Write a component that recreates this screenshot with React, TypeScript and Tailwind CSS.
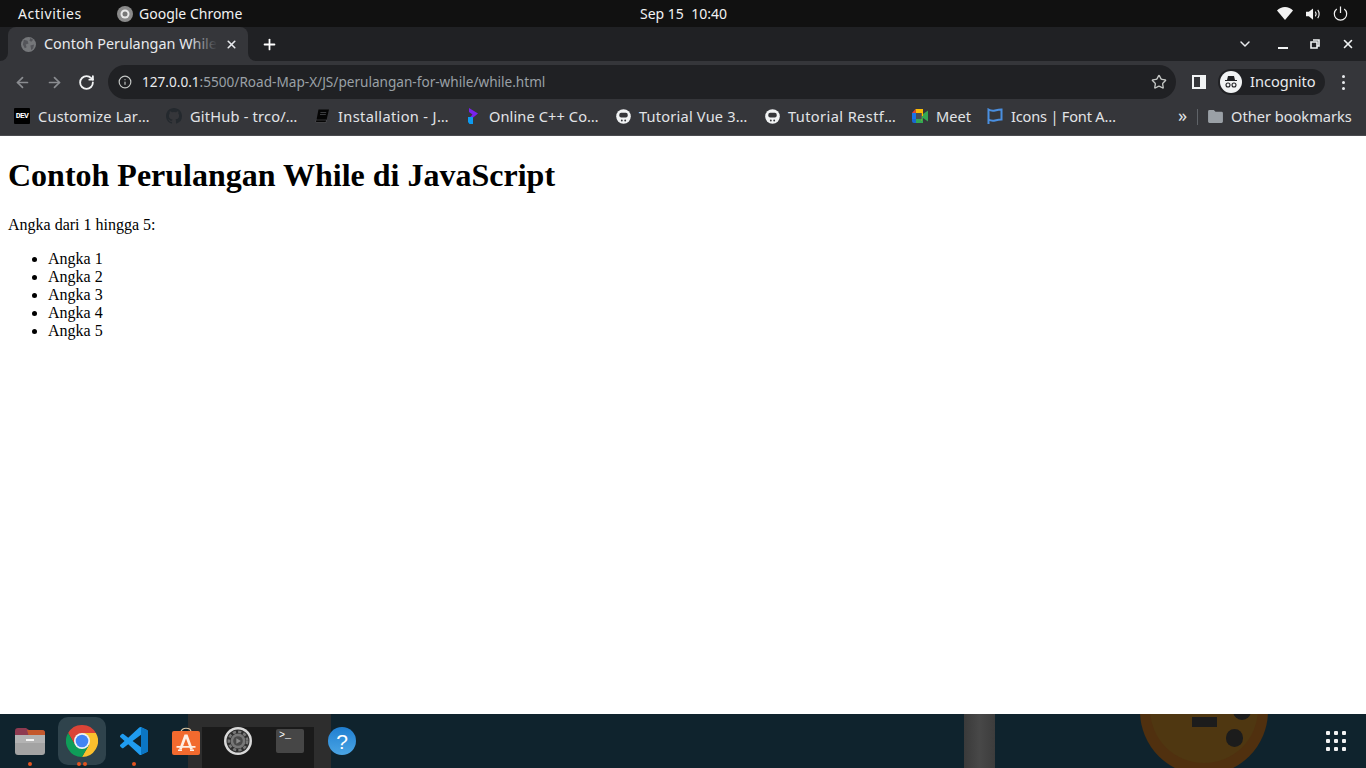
import { ArrowLeft, ArrowRight, ChevronDown, Info, Plus, RotateCw, Star, X } from 'lucide-react'

const sans = "font-['Noto_Sans',sans-serif]"

const DevIcon = () => (
  <span className="flex h-4 w-4 items-center justify-center rounded-[1px] bg-black font-['Liberation_Mono',monospace] text-[8px] font-bold tracking-[-0.6px] text-white">DEV</span>
)

const GithubIcon = () => (
  <svg viewBox="0 0 16 16" className="h-4 w-4" fill="#24292e">
    <path d="M8 0C3.58 0 0 3.58 0 8c0 3.54 2.29 6.53 5.47 7.59.4.07.55-.17.55-.38v-1.34c-2.23.48-2.7-1.07-2.7-1.07-.36-.92-.89-1.17-.89-1.17-.73-.5.05-.49.05-.49.8.06 1.23.83 1.23.83.71 1.22 1.87.87 2.33.66.07-.52.28-.87.5-1.07-1.78-.2-3.64-.89-3.64-3.95 0-.87.31-1.59.82-2.15-.08-.2-.36-1.02.08-2.12 0 0 .67-.21 2.2.82a7.6 7.6 0 0 1 4 0c1.53-1.04 2.2-.82 2.2-.82.44 1.1.16 1.92.08 2.12.51.56.82 1.27.82 2.15 0 3.07-1.87 3.75-3.65 3.95.29.25.54.73.54 1.48v2.2c0 .21.15.46.55.38A8 8 0 0 0 16 8c0-4.42-3.58-8-8-8z" />
  </svg>
)

const BookIcon = () => (
  <svg viewBox="0 0 16 16" className="h-4 w-4">
    <path d="M4.500 1.500h10.500l-2.500 10.500H2.500z" fill="#050505" />
    <path d="M2.500 12h10l-.5 2.500H2.500c-1.200 0-1.200-2.500 0-2.500z" fill="#050505" stroke="#66676b" strokeWidth=".5" />
    <path d="M6.400 4.500h5.800M6 6.500h5.800" stroke="#55565a" strokeWidth=".7" />
  </svg>
)

const PrismIcon = () => (
  <svg viewBox="0 0 10 16" className="h-4 w-[10px]">
    <path d="M1 0l9 5.500L4 10.500H1L4.500 6.500 1 4z" fill="#7a22ee" />
    <path d="M0 9h5v7H1.500L0 14z" fill="#0d9bf0" />
  </svg>
)

const SkullIcon = () => (
  <svg viewBox="0 0 16 16" className="h-[15px] w-[15px]">
    <circle cx="8" cy="8" r="7.800" fill="#f1f3f4" />
    <rect x="3.500" y="4" width="9" height="5" rx="2" fill="#35363a" />
    <circle cx="6.200" cy="12.300" r="1" fill="#35363a" />
    <circle cx="9.800" cy="12.300" r="1" fill="#35363a" />
  </svg>
)

const MeetIcon = () => (
  <svg viewBox="0 0 16 14" className="h-[14px] w-4">
    <path d="M3.500 0H11v4H3.500z" fill="#fbbc04" />
    <path d="M3.500 0v4H0z" fill="#ea4335" />
    <path d="M0 4h4v6H0z" fill="#1a73e8" />
    <path d="M0 10h4v4H2a2 2 0 0 1-2-2z" fill="#1967d2" />
    <path d="M4 10h7v4H4z" fill="#34a853" />
    <path d="M9.500 2H11v10H9.500z" fill="#fbbc04" />
    <path d="M9.500 7H11v5H9.500z" fill="#34a853" />
    <path d="M11 5l5-3.500v11L11 9z" fill="#34a853" />
    <path d="M4 4h5.500v6H4z" fill="#4b4d52" />
  </svg>
)

const FlagIcon = () => (
  <svg viewBox="0 0 16 16" className="h-4 w-4" fill="none" stroke="#4a8fe0" strokeWidth="2">
    <path d="M1.500 16V1.500C4 3 6 3 8 2.500s4-1 6.500-1v10c-2.500 0-4.500.5-6.500 1s-4 .5-6.500-1" />
  </svg>
)

const FolderIcon = () => (
  <svg viewBox="0 0 16 14" className="h-[13px] w-[15px]" fill="#9aa0a6">
    <path d="M1.500 0h4.700L8 2h6.500A1.500 1.500 0 0 1 16 3.500v9a1.500 1.500 0 0 1-1.500 1.500h-13A1.500 1.500 0 0 1 0 12.500v-11A1.500 1.500 0 0 1 1.500 0z" />
  </svg>
)

const bookmarks = [
  { icon: <DevIcon />, label: 'Customize Lar', width: 'w-[112px] tracking-[0.2px]' },
  { icon: <GithubIcon />, label: 'GitHub - trco/', width: 'w-[108px] tracking-[0.2px]' },
  { icon: <BookIcon />, label: 'Installation - J', width: 'w-[111px] tracking-[0.35px]' },
  { icon: <PrismIcon />, label: 'Online C++ Co', width: 'w-[110px] tracking-[0.1px]' },
  { icon: <SkullIcon />, label: 'Tutorial Vue 3', width: 'w-[109px] tracking-[0.2px]' },
  { icon: <SkullIcon />, label: 'Tutorial Restf', width: 'w-[108px] tracking-[0.4px]' },
  { icon: <MeetIcon />, label: 'Meet', width: 'w-[35px]', plain: true },
  { icon: <FlagIcon />, label: 'Icons | Font A', width: 'w-[106px] tracking-[-0.2px]' },
]

const TopBar = () => (
  <div className={`relative flex h-[27px] items-center bg-[#111111] pl-[18px] text-[14px] text-[#f2f2f2] ${sans}`}>
    <span className="w-[99px] tracking-[0.55px]">Activities</span>
    <svg viewBox="0 0 16 16" className="mr-[6px] h-4 w-4">
      <circle cx="8" cy="8" r="8" fill="#8a8a8a" />
      <circle cx="8" cy="8" r="4.500" fill="#e8e8e8" />
      <circle cx="8" cy="8" r="2.500" fill="#777777" />
    </svg>
    <span>Google Chrome</span>
    <span className="absolute left-[640px] top-[3px] whitespace-pre">Sep 15  10:40</span>
    <div className="ml-auto flex items-center pr-[18px]">
      <svg viewBox="0 0 16 13" className="mr-[13px] h-[13px] w-4" fill="#f2f2f2">
        <path d="M8 13L0 3.500C2 1.500 5 0 8 0s6 1.500 8 3.500z" />
      </svg>
      <svg viewBox="0 0 16 14" className="mr-[12px] h-[14px] w-[15px]" fill="none">
        <path d="M0 4.500h3L7.500 1v12L3 9.500H0z" fill="#f2f2f2" />
        <path d="M10 4.500c1 1.500 1 3.500 0 5M12.500 2.500c2 2.500 2 6.500 0 9" stroke="#f2f2f2" strokeWidth="1.200" />
      </svg>
      <svg viewBox="0 0 16 16" className="h-[15px] w-[15px]" fill="none" stroke="#f2f2f2" strokeWidth="1.300">
        <path d="M4 3.200a6.600 6.600 0 1 0 8 0M8 .5v7" />
      </svg>
    </div>
  </div>
)

const TabStrip = () => (
  <div className={`flex h-[34px] items-center bg-[#202124] pl-2 ${sans}`}>
    <div className="relative flex h-full w-[240px] items-center rounded-t-[8px] bg-[#35363a] pl-[13px] pr-2 text-[14.4px] text-[#e8eaed]">
      <span className="absolute bottom-0 left-[-8px] h-2 w-2 bg-[#35363a]">
        <span className="block h-full w-full rounded-br-[8px] bg-[#202124]" />
      </span>
      <span className="absolute bottom-0 right-[-8px] h-2 w-2 bg-[#35363a]">
        <span className="block h-full w-full rounded-bl-[8px] bg-[#202124]" />
      </span>
      <svg viewBox="0 0 16 16" className="mr-[8px] h-[15px] w-[15px] shrink-0">
        <circle cx="8" cy="8" r="8" fill="#75777a" />
        <path d="M3 3l4 1 1 3-3 1 1 3-2 1-2-4zM10 1l3 2-2 2-2-1zM10 9l4-1-1 4-2 2z" fill="#54555a" />
      </svg>
      <div className="relative w-[173px] overflow-hidden whitespace-nowrap">
        Contoh Perulangan While
        <span className="absolute inset-y-0 right-0 w-7 bg-gradient-to-r from-transparent to-[#35363a]" />
      </div>
      <X size={13} strokeWidth={3} className="ml-[8px] shrink-0 text-[#e8eaed]" />
    </div>
    <Plus size={17} strokeWidth={2.5} className="ml-[13px] text-white" />
    <div className="ml-auto flex items-center text-[#e8eaed]">
      <ChevronDown size={16} strokeWidth={2.2} className="mr-[25px]" />
      <svg viewBox="0 0 10 2" className="mr-[22px] mt-[7px] h-[2px] w-[10px]" fill="#f1f3f4"><path d="M0 0h10v2H0z" /></svg>
      <svg viewBox="0 0 10 10" className="mr-[21px] h-[10px] w-[10px]" fill="none" stroke="#f1f3f4" strokeWidth="1.600">
        <path d="M3 1h6v6H7M1 3h6v6H1z" />
      </svg>
      <X size={14} strokeWidth={2.8} className="mr-[11px] text-[#f1f3f4]" />
    </div>
  </div>
)

const Toolbar = () => (
  <div className={`flex h-[39px] items-center bg-[#35363a] pl-[14px] pt-[3px] ${sans}`}>
    <ArrowLeft size={17} strokeWidth={2.4} className="mr-[15px] text-[#8b8d91]" />
    <ArrowRight size={17} strokeWidth={2.4} className="mr-[15px] text-[#8b8d91]" />
    <RotateCw size={17} strokeWidth={2.6} className="mr-[13px] text-[#f1f3f4]" />
    <div className="flex h-[34px] w-[1068px] items-center rounded-full bg-[#202124] pl-[10px] pr-[9px] text-[13.6px]">
      <Info size={14} strokeWidth={2} className="mr-[10px] text-[#c4c7c5]" />
      <span className="text-[#e8eaed]">127.0.0.1</span>
      <span className="text-[#9aa0a6]">:5500/Road-Map-X/JS/perulangan-for-while/while.html</span>
      <Star size={16} strokeWidth={2} className="ml-auto text-[#c4c7c5]" />
    </div>
    <svg viewBox="0 0 14 14" className="ml-4 h-[14px] w-[14px]" fill="#f1f3f4">
      <path fillRule="evenodd" d="M0 0h14v14H0zM2 2v10h6V2z" />
    </svg>
    <div className="ml-[12px] flex h-[26px] w-[107px] items-center rounded-full bg-[#202124] pl-[2px] text-[14.6px] text-[#e8eaed]">
      <svg viewBox="0 0 22 22" className="mr-2 h-[22px] w-[22px]">
        <circle cx="11" cy="11" r="11" fill="#f1f3f4" />
        <path d="M8 5h6l1 4h2v1H5V9h2z" fill="#202124" />
        <circle cx="8" cy="14" r="2" fill="none" stroke="#202124" strokeWidth="1.100" />
        <circle cx="14" cy="14" r="2" fill="none" stroke="#202124" strokeWidth="1.100" />
      </svg>
      Incognito
    </div>
    <div className="ml-[17px] flex flex-col gap-[3px]">
      <span className="h-[3px] w-[3px] rounded-full bg-[#e8eaed]" />
      <span className="h-[3px] w-[3px] rounded-full bg-[#e8eaed]" />
      <span className="h-[3px] w-[3px] rounded-full bg-[#e8eaed]" />
    </div>
  </div>
)

const BookmarksBar = () => (
  <div className={`flex h-[36px] items-center gap-4 border-b border-[#4a4b4f] bg-[#35363a] pb-[2px] pl-[14px] text-[14.6px] text-[#e2e4e7] ${sans}`}>
    {bookmarks.map((b, i) => (
      <div key={i} className="flex items-center gap-2">
        <span className="flex w-4 justify-center">{b.icon}</span>
        <span className={`whitespace-nowrap ${b.width}`}>
          {b.label}
          {!b.plain && <span className="tracking-[1px]">…</span>}
        </span>
      </div>
    ))}
    <span className="mb-[3px] ml-[45px] w-[10px] text-[18px] leading-none">»</span>
    <span className="ml-[-7px] h-[16px] w-px bg-[#5f6368]" />
    <div className="ml-[-6px] flex items-center gap-[8px]">
      <FolderIcon />
      <span className="whitespace-nowrap">Other bookmarks</span>
    </div>
  </div>
)

const ChromeLogo = () => (
  <svg viewBox="0 0 32 32" className="h-8 w-8">
    <path d="M2.140 8A16 16 0 0 1 29.860 8H16L9.070 20z" fill="#db4437" />
    <path d="M29.860 8A16 16 0 0 1 16 32l6.930-12L16 8z" fill="#fbc02d" />
    <path d="M16 32A16 16 0 0 1 2.140 8l6.930 12h13.860z" fill="#0f9d58" />
    <circle cx="16" cy="16" r="8" fill="#f1f3f4" />
    <circle cx="16" cy="16" r="6.300" fill="#4285f4" />
  </svg>
)

const Dot = () => <span className="h-1 w-1 rounded-full bg-[#e2531f]" />

const dockIcons = [
  {
    dots: 1,
    icon: (
      <svg viewBox="0 0 30 27" className="h-[27px] w-[30px]">
        <path d="M0 3a3 3 0 0 1 3-3h8l3 2h13a3 3 0 0 1 3 3v6H0z" fill="#8e3a50" />
        <path d="M12 2h15a3 3 0 0 1 3 3v4H14z" fill="#c4582c" />
        <path d="M0 7h30v17a3 3 0 0 1-3 3H3a3 3 0 0 1-3-3z" fill="#a3a3a3" />
        <path d="M0 7h30v8H0z" fill="#b3b3b3" />
        <path d="M11 11h8v2h-8z" fill="#f5f5f5" />
      </svg>
    ),
  },
  { dots: 2, icon: <ChromeLogo />, active: true },
  {
    dots: 1,
    icon: (
      <svg viewBox="0 0 24 24" className="h-[28px] w-[28px]">
        <path d="M23.150 2.587L18.210.21a1.494 1.494 0 0 0-1.705.29l-9.460 8.630-4.120-3.128a.999.999 0 0 0-1.276.057L.327 7.261A1 1 0 0 0 .326 8.740L3.899 12 .326 15.260a1 1 0 0 0 .001 1.479L1.650 17.940a.999.999 0 0 0 1.276.057l4.120-3.128 9.460 8.630a1.492 1.492 0 0 0 1.704.29l4.942-2.377A1.500 1.500 0 0 0 24 20.060V3.939a1.500 1.500 0 0 0-.850-1.352zm-5.146 14.861L10.826 12l7.178-5.448v10.896z" fill="#1f9cf0" />
        <path d="M18 .05a1.500 1.500 0 0 1 .210.160l4.940 2.377A1.500 1.500 0 0 1 24 3.939V20.060a1.500 1.500 0 0 1-.850 1.352l-4.942 2.377A1.500 1.500 0 0 1 18 23.950V.05z" fill="#0b76c4" />
      </svg>
    ),
  },
  {
    dots: 0,
    icon: (
      <svg viewBox="0 0 28 28" className="h-[28px] w-[28px]">
        <path d="M9 5c0-5 10-5 10 0" fill="none" stroke="#e0c9a6" strokeWidth="1.200" />
        <rect y="4" width="28" height="24" rx="2" fill="#f26a2e" />
        <path d="M12.500 7.500h3L21 22.500h-2.800l-4.200-11-4.200 11H7z" fill="#fdeee4" />
        <path d="M4.500 19h19v1.800h-19zM6 22.500h4v1.500H6zM18 22.500h4v1.500h-4z" fill="#fdeee4" />
      </svg>
    ),
  },
  {
    dots: 0,
    icon: (
      <svg viewBox="0 0 28 28" className="h-[28px] w-[28px]">
        <circle cx="14" cy="14" r="14" fill="#d9d9d9" />
        <circle cx="14" cy="14" r="11.500" fill="#2e2e2e" />
        <circle cx="14" cy="14" r="9.200" fill="none" stroke="#777777" strokeWidth="2.600" strokeDasharray="3.200 2.200" />
        <circle cx="14" cy="14" r="7.500" fill="#777777" />
        <circle cx="14" cy="14" r="4.800" fill="#4a4a4a" />
        <path d="M12.300 11.200l4.600 2.800-4.600 2.800z" fill="#8c8c8c" />
      </svg>
    ),
  },
  {
    dots: 0,
    icon: (
      <span className="flex h-[24px] w-[28px] items-start rounded-[2px] bg-[#464646] pl-[3px] pt-[1px] font-['Liberation_Mono',monospace] text-[10px] leading-[12px] text-white">
        {'>_'}
      </span>
    ),
  },
  {
    dots: 0,
    icon: (
      <span className="flex h-[28px] w-[28px] items-center justify-center rounded-full bg-gradient-to-b from-[#1f7fd1] to-[#4aa5e4] font-['Liberation_Sans',sans-serif] text-[21px] leading-none text-white">
        ?
      </span>
    ),
  },
]

const Dock = () => (
  <div className="relative flex h-[54px] items-center overflow-hidden bg-[#0f232d] pl-[4px]">
    {/* wallpaper showing through the dock */}
    <div className="absolute inset-y-0 left-[188px] w-[143px] bg-[#2d2d2d]" />
    <div className="absolute bottom-0 left-[202px] top-[13px] w-[112px] bg-[#1a1a1a]" />
    <div className="absolute inset-y-0 left-[964px] w-[31px] bg-gradient-to-r from-[#3a3a3a] via-[#484848] to-[#3c3c3c]" />
    <div className="absolute left-[1140px] top-[-67px] h-[128px] w-[128px] rounded-full bg-[#50300f]" />
    <div className="absolute left-[1150px] top-[-59px] h-[108px] w-[108px] rounded-full bg-[#4f3711]" />
    <div className="absolute left-[1192px] top-[3px] h-[10px] w-[25px] bg-[#1c1c1c]" />
    <div className="absolute left-[1233px] top-[-12px] h-[18px] w-[18px] rounded-full bg-[#1c1c1c]" />
    <div className="absolute left-[1226px] top-[15px] h-[18px] w-[17px] rounded-full bg-[#1c1c1c]" />

    {dockIcons.map((d, i) => (
      <div key={i} className="relative flex h-[48px] w-[52px] items-center justify-center">
        {d.active && <div className="absolute inset-y-0 left-[2px] w-[48px] rounded-[10px] bg-[#2f434c]" />}
        <div className="relative">{d.icon}</div>
        {d.dots > 0 && (
          <div className="absolute bottom-[-1px] flex gap-[2px]">
            {d.dots === 2 && <Dot />}
            <Dot />
          </div>
        )}
      </div>
    ))}

    <div className="relative ml-auto mr-[20px] grid grid-cols-3 gap-[4px]">
      {Array.from({ length: 9 }).map((_, i) => (
        <span key={i} className="h-[4px] w-[4px] rounded-[1px] bg-[#f2f2f2]" />
      ))}
    </div>
  </div>
)

const Page = () => (
  <div className="h-[578px] overflow-hidden bg-white px-2 font-['Liberation_Serif',serif] text-[16px] leading-[18px] text-black">
    <h1 className="my-[21.44px] text-[32px] font-bold leading-[37px]">Contoh Perulangan While di JavaScript</h1>
    <p className="my-4">Angka dari 1 hingga 5:</p>
    <ul className="my-4 list-disc pl-10">
      <li>Angka 1</li>
      <li>Angka 2</li>
      <li>Angka 3</li>
      <li>Angka 4</li>
      <li>Angka 5</li>
    </ul>
  </div>
)

export default function App() {
  return (
    <div className="h-[768px] w-[1366px] overflow-hidden">
      <TopBar />
      <TabStrip />
      <Toolbar />
      <BookmarksBar />
      <Page />
      <Dock />
    </div>
  )
}
